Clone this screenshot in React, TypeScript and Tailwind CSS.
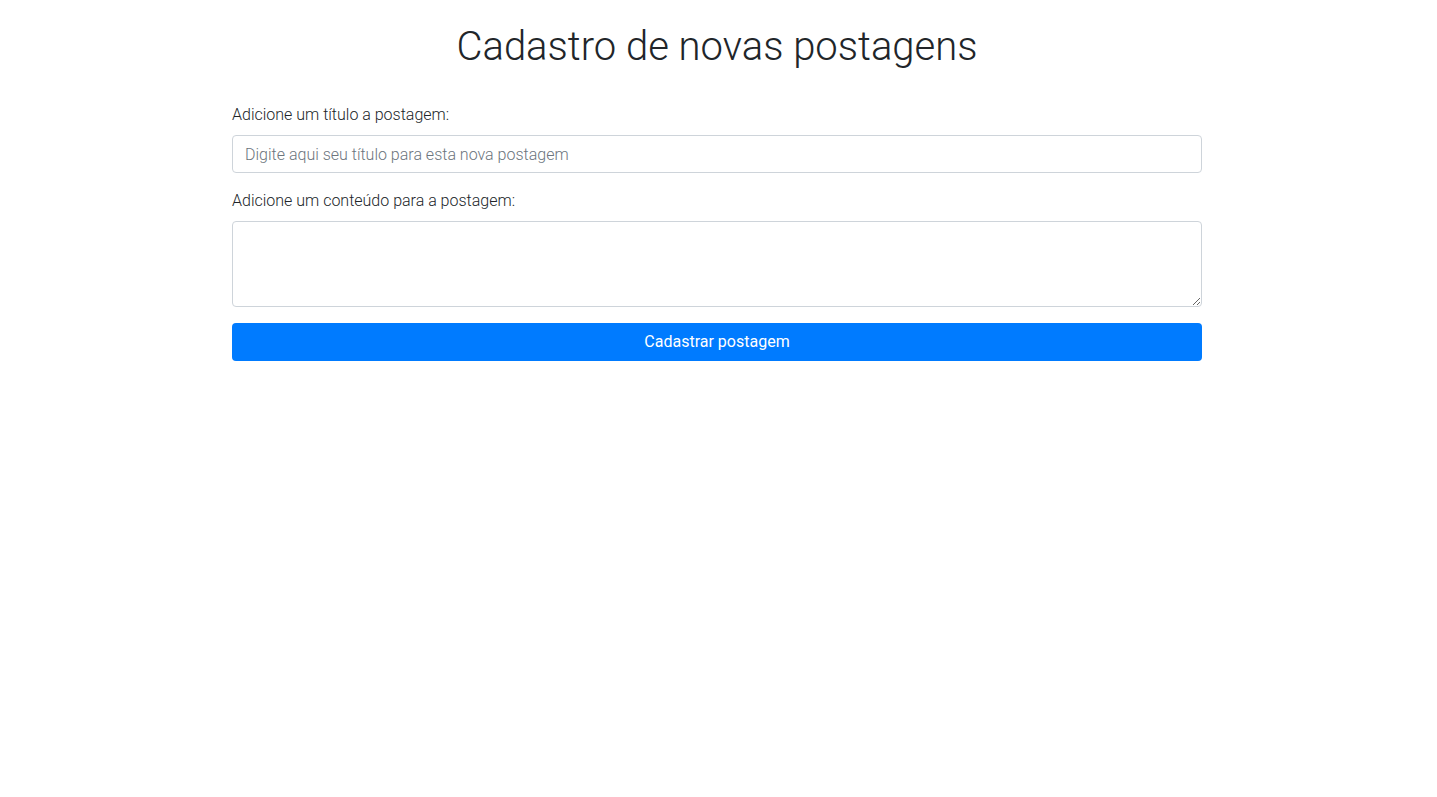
import { useState } from "react";

export default function App() {
  const [titulo, setTitulo] = useState("");
  const [conteudo, setConteudo] = useState("");

  return (
    <div className="min-h-screen bg-white text-[#212529] font-['Roboto',sans-serif] font-light pr-[3px]">
      <div className="w-[970px] mx-auto">
        <h1 className="text-[40px] leading-[48px] font-light text-center pt-[23px] mb-8">
          Cadastro de novas postagens
        </h1>
        <form onSubmit={(e) => e.preventDefault()}>
          <div className="mb-4">
            <label htmlFor="titulo" className="block text-base leading-6 mb-2">
              Adicione um título a postagem:
            </label>
            <input
              id="titulo"
              type="text"
              value={titulo}
              onChange={(e) => setTitulo(e.target.value)}
              placeholder="Digite aqui seu título para esta nova postagem"
              className="block w-full h-[38px] px-3 py-1.5 text-base leading-6 font-light text-[#495057] border border-[#ced4da] rounded outline-none placeholder:text-[#6c757d]"
            />
          </div>
          <div className="mb-4">
            <label htmlFor="conteudo" className="block text-base leading-6 mb-2">
              Adicione um conteúdo para a postagem:
            </label>
            <textarea
              id="conteudo"
              rows={3}
              value={conteudo}
              onChange={(e) => setConteudo(e.target.value)}
              className="block w-full h-[86px] px-3 py-1.5 text-base leading-6 font-light text-[#495057] border border-[#ced4da] rounded outline-none"
            />
          </div>
          <button
            type="submit"
            className="block w-full h-[38px] bg-[#007bff] text-white text-base leading-6 font-normal rounded"
          >
            Cadastrar postagem
          </button>
        </form>
      </div>
    </div>
  );
}
